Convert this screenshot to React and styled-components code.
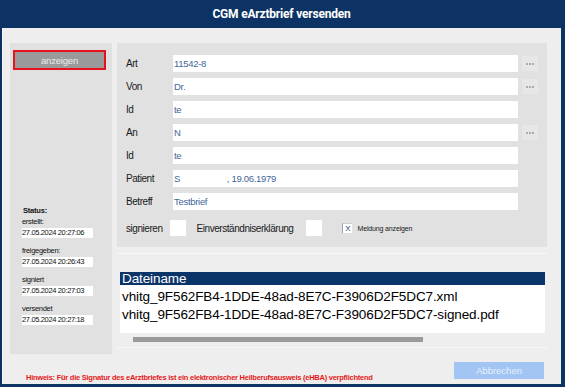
import React from 'react';
import styled, { createGlobalStyle } from 'styled-components';

const GlobalStyle = createGlobalStyle`
  html, body {
    margin: 0;
    padding: 0;
    background: #ffffff;
  }
  body {
    font-family: "Liberation Sans", Arial, sans-serif;
  }
`;

const Window = styled.div`
  width: 565px;
  height: 387px;
  box-sizing: border-box;
  background: #0c3363;
  padding: 0 4px 3px 2px;
  display: flex;
  flex-direction: column;
`;

const TitleBar = styled.div`
  height: 28px;
  flex: none;
  display: flex;
  align-items: center;
  justify-content: center;
  color: #ffffff;
  font-family: Roboto, "Liberation Sans", sans-serif;
  font-weight: 700;
  font-size: 12px;
  letter-spacing: -0.2px;
`;

const Body = styled.div`
  flex: 1;
  background: #eeeeee;
  border-left: 1px solid #f8f8f8;
  display: flex;
  flex-direction: column;
  padding: 15px 14px 0 7px;
`;

const Main = styled.div`
  display: grid;
  grid-template-columns: 102px 1fr;
  column-gap: 5px;
  height: 311px;
`;

const SidePanel = styled.div`
  background: #e1e1e1;
  display: flex;
  flex-direction: column;
  padding: 7px 0 0 3px;
`;

const ShowButton = styled.div`
  width: 93px;
  height: 20px;
  box-sizing: border-box;
  border: 2px solid #e5141c;
  background: #9a9a9a;
  color: #ececec;
  font-size: 9.5px;
  letter-spacing: -0.2px;
  display: flex;
  align-items: center;
  justify-content: center;
`;

const StatusBlock = styled.div`
  margin-top: auto;
  margin-bottom: 29px;
  padding-left: 9px;
  display: flex;
  flex-direction: column;
`;

const StatusTitle = styled.div`
  font-size: 7.5px;
  font-weight: 700;
  letter-spacing: -0.2px;
  color: #111;
  margin-bottom: 2px;
  padding-left: 1px;
`;

const StatusLabel = styled.div`
  font-size: 7.5px;
  letter-spacing: -0.3px;
  color: #111;
  line-height: 10px;
  margin-top: ${p => (p.$first ? '0' : '8px')};
`;

const StatusValue = styled.div`
  width: 71px;
  height: 10px;
  background: #ffffff;
  font-size: 7.5px;
  line-height: 10px;
  letter-spacing: -0.35px;
  color: #111;
  margin-top: 1px;
`;

const RightColumn = styled.div`
  display: flex;
  flex-direction: column;
`;

const FormPanel = styled.div`
  background: #e1e1e1;
  height: 204px;
  box-sizing: border-box;
  padding: 12px 9px 0 9px;
  display: flex;
  flex-direction: column;
  gap: 6px;
`;

const FieldRow = styled.div`
  display: grid;
  grid-template-columns: 43px 345px 16px;
  column-gap: 4px;
  align-items: center;
  height: 17px;
`;

const Label = styled.div`
  font-size: 10px;
  letter-spacing: -0.45px;
  color: #1a1a1a;
`;

const Input = styled.div`
  height: 17px;
  background: #ffffff;
  color: #3f6699;
  font-size: 9.5px;
  letter-spacing: -0.3px;
  line-height: 17px;
  padding-left: 1px;
  white-space: pre;
`;

const DotsButton = styled.div`
  width: 16px;
  height: 15px;
  background: #e7e7e7;
  display: flex;
  align-items: center;
  justify-content: center;
  gap: 1px;
  span {
    width: 2px;
    height: 2px;
    background: #ababab;
  }
`;

const CheckRow = styled.div`
  display: flex;
  align-items: center;
  height: 16px;
  margin-top: 4px;
`;

const CheckBox = styled.div`
  width: 16px;
  height: 16px;
  background: #ffffff;
  margin-left: ${p => p.$ml}px;
  margin-right: ${p => p.$mr}px;
`;

const SmallCheck = styled.div`
  width: 9px;
  height: 9px;
  background: #ffffff;
  border-left: 1px solid #9aa4b5;
  border-top: 1px solid #c8cdd6;
  color: #1e3f74;
  font-size: 8px;
  line-height: 9px;
  text-align: center;
  margin-right: 5px;
`;

const SmallText = styled.div`
  font-size: 7px;
  letter-spacing: -0.15px;
  color: #1a1a1a;
`;

const FileArea = styled.div`
  margin-top: 6px;
  border-top: 1px solid #f7f7f7;
  border-bottom: 1px solid #f7f7f7;
  padding: 18px 2px 0 3px;
  height: 75px;
`;

const FileHeader = styled.div`
  height: 13px;
  background: #0b3468;
  color: #ffffff;
  font-size: 13.5px;
  line-height: 14px;
  padding-left: 2px;
  letter-spacing: -0.1px;
`;

const FileList = styled.div`
  height: 48px;
  background: #ffffff;
  padding: 3px 0 0 2px;
  box-sizing: border-box;
`;

const FileItem = styled.div`
  font-size: 13.5px;
  line-height: 18px;
  color: #000;
  letter-spacing: -0.1px;
`;

const ScrollTrack = styled.div`
  height: 13px;
  display: flex;
  align-items: center;
  padding-left: 13px;
`;

const ScrollThumb = styled.div`
  width: 290px;
  height: 5px;
  background: #9a9a9a;
`;

const Footer = styled.div`
  flex: 1;
  display: flex;
  align-items: flex-start;
  justify-content: space-between;
  padding: 8px 3px 0 16px;
`;

const Hint = styled.div`
  color: #e41a1a;
  font-size: 7.5px;
  font-weight: 700;
  letter-spacing: -0.25px;
  margin-top: 11px;
`;

const CancelButton = styled.div`
  width: 90px;
  height: 17px;
  background: #a2c5f3;
  color: #e8f0fb;
  font-size: 9.5px;
  display: flex;
  align-items: center;
  justify-content: center;
`;

const fields = [
  { label: 'Art', value: '11542-8', dots: true },
  { label: 'Von', value: 'Dr.', dots: true },
  { label: 'Id', value: 'te' },
  { label: 'An', value: 'N', dots: true },
  { label: 'Id', value: 'te' },
  { label: 'Patient', value: 'S                    , 19.06.1979' },
  { label: 'Betreff', value: 'Testbrief' },
];

const status = [
  { label: 'erstellt:', value: '27.05.2024 20:27:06' },
  { label: 'freigegeben:', value: '27.05.2024 20:26:43' },
  { label: 'signiert', value: '27.05.2024 20:27:03' },
  { label: 'versendet', value: '27.05.2024 20:27:18' },
];

const files = [
  'vhitg_9F562FB4-1DDE-48ad-8E7C-F3906D2F5DC7.xml',
  'vhitg_9F562FB4-1DDE-48ad-8E7C-F3906D2F5DC7-signed.pdf',
];

export default function App() {
  return (
    <>
      <GlobalStyle />
      <Window>
        <TitleBar>CGM eArztbrief versenden</TitleBar>
        <Body>
          <Main>
            <SidePanel>
              <ShowButton>anzeigen</ShowButton>
              <StatusBlock>
                <StatusTitle>Status:</StatusTitle>
                {status.map((s, i) => (
                  <React.Fragment key={s.label}>
                    <StatusLabel $first={i === 0}>{s.label}</StatusLabel>
                    <StatusValue>{s.value}</StatusValue>
                  </React.Fragment>
                ))}
              </StatusBlock>
            </SidePanel>
            <RightColumn>
              <FormPanel>
                {fields.map((f, i) => (
                  <FieldRow key={i}>
                    <Label>{f.label}</Label>
                    <Input>{f.value}</Input>
                    {f.dots ? (
                      <DotsButton><span /><span /><span /></DotsButton>
                    ) : <div />}
                  </FieldRow>
                ))}
                <CheckRow>
                  <Label>signieren</Label>
                  <CheckBox $ml={7} $mr={11} />
                  <Label>Einverständniserklärung</Label>
                  <CheckBox $ml={13} $mr={20} />
                  <SmallCheck>X</SmallCheck>
                  <SmallText>Meldung anzeigen</SmallText>
                </CheckRow>
              </FormPanel>
              <FileArea>
                <FileHeader>Dateiname</FileHeader>
                <FileList>
                  {files.map(f => <FileItem key={f}>{f}</FileItem>)}
                </FileList>
                <ScrollTrack><ScrollThumb /></ScrollTrack>
              </FileArea>
            </RightColumn>
          </Main>
          <Footer>
            <Hint>Hinweis: Für die Signatur des eArztbriefes ist ein elektronischer Heilberufsausweis (eHBA) verpflichtend</Hint>
            <CancelButton>Abbrechen</CancelButton>
          </Footer>
        </Body>
      </Window>
    </>
  );
}
